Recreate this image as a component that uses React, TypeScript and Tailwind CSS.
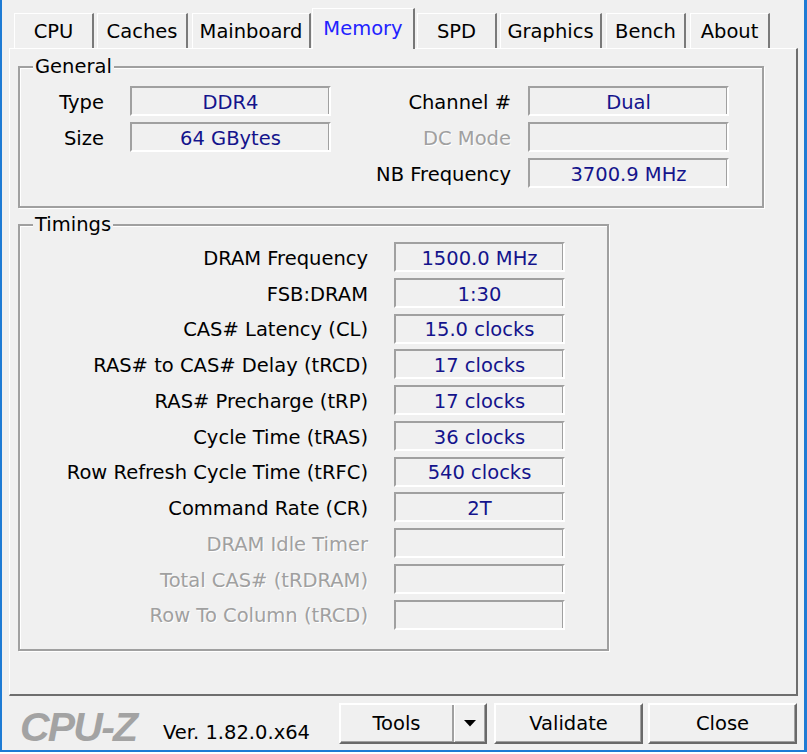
import React from 'react';

const tabs = [
  { name: 'CPU', cls: 'ml-[12px] w-[80px]' },
  { name: 'Caches', cls: 'ml-[3px] w-[91px]' },
  { name: 'Mainboard', cls: 'ml-[4px] w-[119px]' },
  { name: 'Memory', cls: 'ml-[1px] w-[103px]', active: true },
  { name: 'SPD', cls: 'ml-[2px] w-[80px]' },
  { name: 'Graphics', cls: 'ml-[3px] w-[102px]' },
  { name: 'Bench', cls: 'ml-[4px] w-[80px]' },
  { name: 'About', cls: 'ml-[4px] w-[80px]' },
];

const general = [
  { l: 'Type', v: 'DDR4', l2: 'Channel #', v2: 'Dual' },
  { l: 'Size', v: '64 GBytes', l2: 'DC Mode', v2: '', off2: true },
  { l: '', v: null, l2: 'NB Frequency', v2: '3700.9 MHz' },
];

const timings = [
  { l: 'DRAM Frequency', v: '1500.0 MHz' },
  { l: 'FSB:DRAM', v: '1:30' },
  { l: 'CAS# Latency (CL)', v: '15.0 clocks' },
  { l: 'RAS# to CAS# Delay (tRCD)', v: '17 clocks' },
  { l: 'RAS# Precharge (tRP)', v: '17 clocks' },
  { l: 'Cycle Time (tRAS)', v: '36 clocks' },
  { l: 'Row Refresh Cycle Time (tRFC)', v: '540 clocks' },
  { l: 'Command Rate (CR)', v: '2T' },
  { l: 'DRAM Idle Timer', v: '', off: true },
  { l: 'Total CAS# (tRDRAM)', v: '', off: true },
  { l: 'Row To Column (tRCD)', v: '', off: true },
];

const Field = ({ value, w }: { value: string; w: string }) => (
  <div
    className={`${w} h-[30px] shrink-0 flex items-center justify-center pt-[3px] border-2 border-t-[#a0a0a0] border-l-[#a0a0a0] border-b-white border-r-white shadow-[inset_-1px_0_0_#a0a0a0] text-[#14148c] whitespace-nowrap`}
  >
    {value}
  </div>
);

const Label = ({ text, w, off }: { text: string; w: string; off?: boolean }) => (
  <div
    className={`${w} shrink-0 pt-[3px] text-right whitespace-nowrap ${off ? 'text-[#a0a0a0] [text-shadow:1px_1px_0_#fff]' : 'text-black'}`}
  >
    {text}
  </div>
);

const Group = ({ title, cls, children }: { title: string; cls: string; children: React.ReactNode }) => (
  <div
    className={`relative ml-[8px] border-2 border-[#a0a0a0] shadow-[inset_1px_1px_0_#fff,1px_1px_0_#fff] ${cls}`}
  >
    <span className="absolute left-[13px] -top-[13px] leading-[24px] px-[2px] bg-[#f0f0f0] text-black">
      {title}
    </span>
    {children}
  </div>
);

const Button = ({ children, cls }: { children: React.ReactNode; cls: string }) => (
  <div
    className={`${cls} h-[41px] shrink-0 flex items-center justify-center bg-[#f0f0f0] border-2 border-t-white border-l-white border-r-[#696969] border-b-[#696969] shadow-[inset_-1px_-1px_0_#a0a0a0] text-black`}
  >
    {children}
  </div>
);

export default function App() {
  return (
    <div className="w-[807px] h-[752px] bg-[#f0f0f0] border-l-2 border-r-[3px] border-b-2 border-[#1e7bd4] flex flex-col font-['DejaVu_Sans',sans-serif] text-[19.5px]">
      {/* Tabs */}
      <div className="relative z-10 mt-[8px] h-[41px] -mb-px flex items-start">
        {tabs.map((t) =>
          t.active ? (
            <div
              key={t.name}
              className={`${t.cls} h-[41px] flex items-center justify-center bg-[#f0f0f0] border-t border-l border-white border-r-2 border-r-[#777] text-[#2222ff]`}
            >
              {t.name}
            </div>
          ) : (
            <div
              key={t.name}
              className={`${t.cls} mt-[5px] h-[35px] flex items-center justify-center pt-[1px] bg-[#f0f0f0] border-t border-l border-white border-r-2 border-r-[#7a7a7a] text-black`}
            >
              {t.name}
            </div>
          )
        )}
      </div>

      {/* Panel */}
      <div className="ml-[7px] w-[789px] h-[648px] shrink-0 border-t border-l border-white border-r-2 border-b-2 border-r-[#6e6e6e] border-b-[#6e6e6e] flex flex-col">
        <Group title="General" cls="mt-[17px] w-[746px] h-[142px] pt-[18px]">
          <div className="flex flex-col gap-[6px]">
            {general.map((r, i) => (
              <div key={i} className="h-[30px] flex items-center">
                <Label text={r.l} w="w-[84px]" />
                {r.v !== null ? (
                  <div className="ml-[26px]">
                    <Field value={r.v} w="w-[201px]" />
                  </div>
                ) : (
                  <div className="ml-[26px] w-[201px]" />
                )}
                <Label text={r.l2} w="w-[180px]" off={r.off2} />
                <div className="ml-[17px]">
                  <Field value={r.v2} w="w-[201px]" />
                </div>
              </div>
            ))}
          </div>
        </Group>

        <Group title="Timings" cls="mt-[16px] w-[591px] h-[427px] pt-[16px]">
          <div className="flex flex-col gap-[5.75px]">
            {timings.map((r) => (
              <div key={r.l} className="h-[30px] flex items-center">
                <Label text={r.l} w="w-[348px]" off={r.off} />
                <div className="ml-[26px]">
                  <Field value={r.v} w="w-[171px]" />
                </div>
              </div>
            ))}
          </div>
        </Group>
      </div>

      {/* Bottom bar */}
      <div className="flex items-start pt-[7px]">
        <div className="ml-[18px] mt-[4px] w-[125px] leading-[41px] text-[41px] font-bold italic tracking-[-1.8px] text-[#a3a3a3] font-['Liberation_Sans',sans-serif]">
          CPU-Z
        </div>
        <div className="ml-[18px] w-[176px] h-[41px] flex items-center pt-[18px] text-black whitespace-nowrap">
          Ver. 1.82.0.x64
        </div>
        <div className="w-[148px] h-[41px] shrink-0 flex bg-[#f0f0f0] border-2 border-t-white border-l-white border-r-[#696969] border-b-[#696969] shadow-[inset_-1px_-1px_0_#a0a0a0]">
          <div className="w-[113px] flex items-center justify-center border-r-2 border-r-[#a0a0a0] shadow-[1px_0_0_#fff]">
            Tools
          </div>
          <div className="flex-1 flex items-center justify-center">
            <svg width="12" height="7" viewBox="0 0 12 7">
              <polygon points="0,0 12,0 6,6.5" fill="#000" />
            </svg>
          </div>
        </div>
        <Button cls="ml-[7px] w-[149px]">Validate</Button>
        <Button cls="ml-[5px] w-[149px]">Close</Button>
      </div>
    </div>
  );
}
